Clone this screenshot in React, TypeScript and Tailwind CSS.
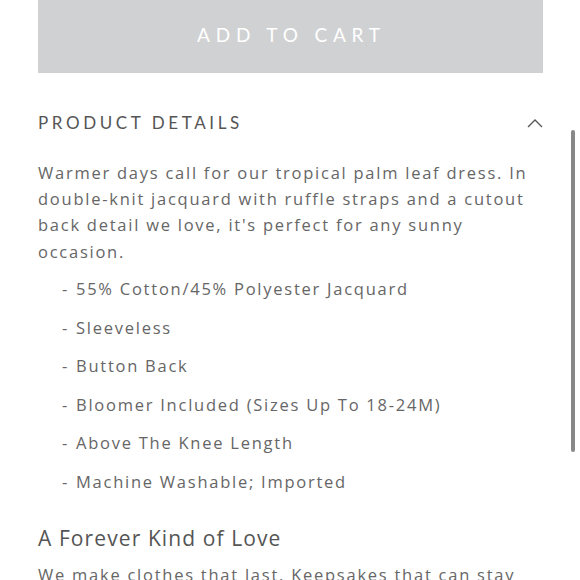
// App.tsx — product details accordion under an add-to-cart button.

const BULLETS = [
  "55% Cotton/45% Polyester Jacquard",
  "Sleeveless",
  "Button Back",
  "Bloomer Included (Sizes Up To 18-24M)",
  "Above The Knee Length",
  "Machine Washable; Imported",
];

export default function App() {
  return (
    <div
      className="relative h-[580px] w-[580px] overflow-hidden bg-white"
      style={{ fontFamily: "'Open Sans', Lato, sans-serif" }}
    >
      <div className="px-[38px] pr-[37px]">
        <button className="flex h-[73px] w-full items-center justify-center bg-[#d0d1d3] pb-[2px] pl-[2px] font-['Lato'] text-[19px] tracking-[5.8px] text-white">
          ADD TO CART
        </button>

        <div className="mt-[37px] flex items-center justify-between">
          <h2 className="font-['Lato'] text-[17px] tracking-[3.6px] text-[#555]">PRODUCT DETAILS</h2>
          <svg width="16" height="10" viewBox="0 0 16 10" fill="none">
            <path d="M1 9 L8 2 L15 9" stroke="#555" strokeWidth="1.3" />
          </svg>
        </div>

        <p className="mr-[11px] mt-[24px] text-[16.5px] leading-[26.4px] tracking-[1.75px] text-[#666]">
          Warmer days call for our tropical palm leaf dress. In double-knit jacquard with ruffle
          straps and a cutout back detail we love, it's perfect for any sunny occasion.
        </p>

        <ul className="mt-[12px] flex flex-col gap-[15px] pl-[24px] text-[16.5px] leading-[23.5px] tracking-[1.75px] text-[#666]">
          {BULLETS.map((b) => (
            <li key={b} className="flex">
              <span className="w-[14px] shrink-0">-</span>
              <span>{b}</span>
            </li>
          ))}
        </ul>

        <h3 className="mt-[30px] text-[21px] tracking-[1.1px] text-[#555]">A Forever Kind of Love</h3>
        <p className="mr-[11px] mt-[7px] text-[16.5px] leading-[26.4px] tracking-[1.75px] text-[#666]">
          We make clothes that last. Keepsakes that can stay in the family for generations.
        </p>
      </div>

      {/* overlay scrollbar */}
      <div className="absolute left-[571px] top-[130px] h-[322px] w-[4px] rounded-full bg-[#888]" />
    </div>
  );
}
